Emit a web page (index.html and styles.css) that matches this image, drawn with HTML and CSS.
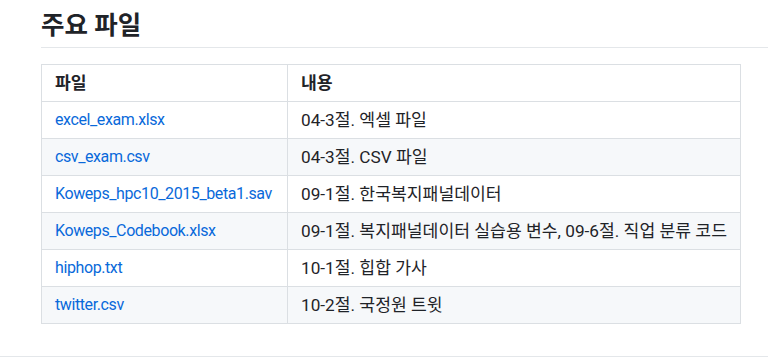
FILE: index.html
```html
<!DOCTYPE html>
<html lang="ko">
<head>
<meta charset="utf-8">
<link rel="stylesheet" href="styles.css">
</head>
<body>
<div class="page">
  <article class="markdown">
    <h2 class="heading">주요 파일</h2>
    <table class="files">
      <colgroup><col class="c1"><col class="c2"></colgroup>
      <thead>
        <tr><th class="ko">파일</th><th class="ko">내용</th></tr>
      </thead>
      <tbody>
        <tr><td><a href="#">excel_exam.xlsx</a></td><td class="ko">04-3절. 엑셀 파일</td></tr>
        <tr><td><a href="#">csv_exam.csv</a></td><td class="ko">04-3절. CSV 파일</td></tr>
        <tr><td><a href="#">Koweps_hpc10_2015_beta1.sav</a></td><td class="ko">09-1절. 한국복지패널데이터</td></tr>
        <tr><td><a href="#">Koweps_Codebook.xlsx</a></td><td class="ko">09-1절. 복지패널데이터 실습용 변수, 09-6절. 직업 분류 코드</td></tr>
        <tr><td><a href="#">hiphop.txt</a></td><td class="ko">10-1절. 힙합 가사</td></tr>
        <tr><td><a href="#">twitter.csv</a></td><td class="ko">10-2절. 국정원 트윗</td></tr>
      </tbody>
    </table>
  </article>
  <div class="footer-rule"></div>
</div>
</body>
</html>
```
FILE: styles.css
```css
html, body {
  margin: 0;
  padding: 0;
  overflow: hidden;
  background: #ffffff;
}
body {
  width: 768px;
  height: 357px;
  font-family: "Segoe UI", Roboto, "Noto Sans CJK KR", sans-serif;
  font-size: 16px;
  line-height: 24px;
  color: #1f2328;
}
.page {
  display: flex;
  flex-direction: column;
}
.markdown {
  margin-left: 41px;
  width: 760px;
  padding-top: 10px;
}
.heading {
  margin: 0 0 16px 0;
  font-size: 25.5px;
  line-height: 30px;
  font-weight: 700;
  padding-bottom: 7px;
  border-bottom: 1px solid #e4e7ea;
  color: #1f2328;
}
.files {
  border-collapse: collapse;
  table-layout: fixed;
  width: 699px;
}
.c1 { width: 246px; }
.c2 { width: 453px; }
.files th, .files td {
  border: 1px solid #dbdfe3;
  padding: 6px 13px;
  text-align: left;
  white-space: nowrap;
  height: 24px;
  line-height: 24px;
}
.files .ko {
  font-size: 17.2px;
}
.files th {
  font-weight: 600;
}
.files tbody tr:nth-child(2n) {
  background: #f6f8fa;
}
.files a {
  color: #0969da;
  text-decoration: none;
  letter-spacing: -0.4px;
}
.footer-rule {
  margin-top: 32px;
  border-top: 1px solid #e4e7ea;
  width: 768px;
}
```
